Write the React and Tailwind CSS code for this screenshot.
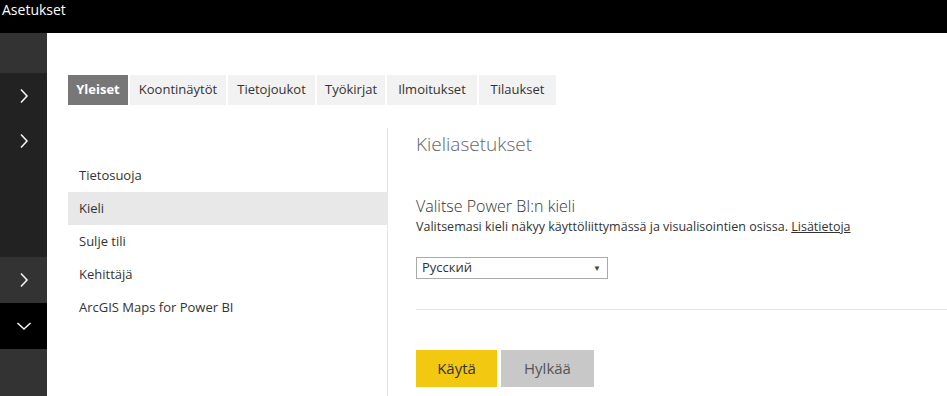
import React from "react";

const Chevron = ({ down }) => (
  <svg width="10" height="16" viewBox="0 0 10 16" className={down ? "rotate-90" : ""}>
    <path d="M2 1.5 L8 8 L2 14.5" fill="none" stroke="#f2f2f2" strokeWidth="1.6" />
  </svg>
);

const tabs = [
  ["Yleiset", "w-[60px]"],
  ["Koontinäytöt", "w-[96px]"],
  ["Tietojoukot", "w-[87px]"],
  ["Työkirjat", "w-[68px]"],
  ["Ilmoitukset", "w-[90px]"],
  ["Tilaukset", "w-[77px]"],
];

const navItems = ["Tietosuoja", "Kieli", "Sulje tili", "Kehittäjä", "ArcGIS Maps for Power BI"];

export default function App() {
  return (
    <div
      className="w-[947px] h-[396px] overflow-hidden bg-white flex flex-col"
      style={{ fontFamily: '"Open Sans", "Noto Sans", sans-serif' }}
    >
      <div className="h-[33px] bg-black text-white text-[14px] leading-[18px] pl-[2px] pt-[1px] shrink-0">
        Asetukset
      </div>
      <div className="flex flex-1 min-h-0">
        <div className="w-[47px] shrink-0 flex flex-col">
          <div className="h-[40px] bg-[#333333]" />
          <div className="h-[184px] bg-[#222222] flex flex-col">
            <div className="h-[45px] flex items-center justify-center pl-[1px]">
              <Chevron />
            </div>
            <div className="h-[45px] flex items-center justify-center pl-[1px]">
              <Chevron />
            </div>
          </div>
          <div className="h-[46px] bg-[#333333] flex items-center justify-center pl-[1px]">
            <Chevron />
          </div>
          <div className="h-[46px] bg-black flex items-center justify-center">
            <Chevron down />
          </div>
          <div className="flex-1 bg-[#333333]" />
        </div>
        <div className="flex-1 pl-[21px] pt-[42px] flex flex-col">
          <div className="flex gap-[2px] h-[30px] shrink-0">
            {tabs.map(([t, w], i) => (
              <div
                key={t}
                className={`${w} flex items-center justify-center text-[13px] ${
                  i === 0 ? "bg-[#777777] text-white font-bold" : "bg-[#f2f2f2] text-[#333333]"
                }`}
              >
                {t}
              </div>
            ))}
          </div>
          <div className="flex flex-1 mt-[23px]">
            <div className="w-[319px] pt-[31px] flex flex-col">
              {navItems.map((n) => (
                <div
                  key={n}
                  className={`h-[33px] pl-[11px] flex items-center text-[13px] text-[#333333] ${
                    n === "Kieli" ? "bg-[#e8e8e8]" : ""
                  }`}
                >
                  {n}
                </div>
              ))}
            </div>
            <div className="w-[1px] bg-[#e6e6e6]" />
            <div className="flex-1 pl-[28px] flex flex-col">
              <div className="text-[19px] font-light text-[#666666] leading-[26px] mt-[3px]">
                Kieliasetukset
              </div>
              <div className="text-[16px] font-light text-[#333333] leading-[22px] mt-[38px]">
                Valitse Power BI:n kieli
              </div>
              <div className="text-[12.5px] text-[#333333] leading-[18px] mt-[1px]">
                Valitsemasi kieli näkyy käyttöliittymässä ja visualisointien osissa.{" "}
                <span className="underline">Lisätietoja</span>
              </div>
              <div className="mt-[21px] w-[192px] h-[22px] border border-[#aaaaaa] flex items-center justify-between pl-[5px] pr-[6px] text-[13px] text-[#333333]">
                <span>Русский</span>
                <span className="text-[8px] text-[#444444]">▼</span>
              </div>
              <div className="mt-[30px] h-[1px] bg-[#e6e6e6]" />
              <div className="mt-[40px] flex gap-[4px]">
                <div className="w-[81px] h-[37px] bg-[#f2c811] flex items-center justify-center text-[15px] text-[#333333]">
                  Käytä
                </div>
                <div className="w-[93px] h-[37px] bg-[#c8c8c8] flex items-center justify-center text-[15px] text-[#555555]">
                  Hylkää
                </div>
              </div>
            </div>
          </div>
        </div>
      </div>
    </div>
  );
}
